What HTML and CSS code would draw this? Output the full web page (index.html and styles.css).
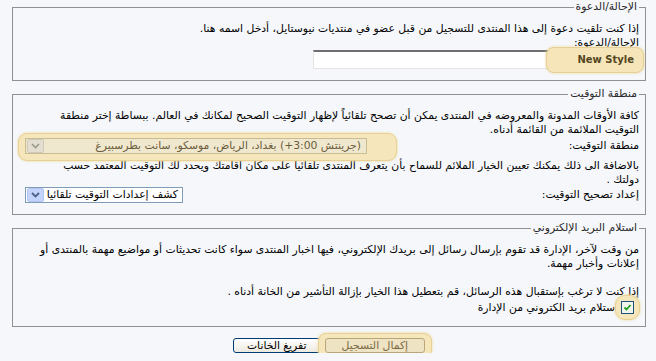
FILE: index.html
```html
<!DOCTYPE html>
<html dir="rtl" lang="ar">
<head>
    <meta charset="UTF-8">
    <title>التسجيل</title>
    <link rel="stylesheet" href="styles.css">
</head>
<body>
    <div class="page">
        <fieldset class="box">
            <legend>الإحالة/الدعوة</legend>
            <p>إذا كنت تلقيت دعوة إلى هذا المنتدى للتسجيل من قبل عضو في منتديات نيوستايل، أدخل اسمه هنا.</p>
            <p>الإحالة/الدعوة:</p>
            <div class="field">
                <span class="text-input"></span>
                <span class="hint">New Style</span>
            </div>
        </fieldset>

        <fieldset class="box">
            <legend>منطقة التوقيت</legend>
            <p>كافة الأوقات المدونة والمعروضه في المنتدى يمكن أن تصحح تلقائياً لإظهار التوقيت الصحيح لمكانك في العالم. ببساطة إختر منطقة<br>التوقيت الملائمة من القائمة أدناه.</p>
            <div class="row row-first">
                <span>منطقة التوقيت:</span>
                <span class="glow glow-select">
                    <span class="select select-off">
                        <span class="select-text">(جرينتش <span dir="ltr">+3:00</span>) بغداد، الرياض، موسكو، سانت بطرسبيرغ</span>
                        <span class="arrow arrow-off">
                            <svg width="9" height="6" viewBox="0 0 9 6"><path d="M1 1 L4.5 4.5 L8 1" fill="none" stroke="#9a9a8c" stroke-width="1.6"/></svg>
                        </span>
                    </span>
                </span>
            </div>
            <p class="under-glow">بالاضافة الى ذلك يمكنك تعيين الخيار الملائم للسماح بأن يتعرف المنتدى تلقائياً على مكان اقامتك ويحدد لك التوقيت المعتمد حسب<br>دولتك .</p>
            <div class="row">
                <span>إعداد تصحيح التوقيت:</span>
                <span class="select select-auto">
                    <span class="select-text">كشف إعدادات التوقيت تلقائيا</span>
                    <span class="arrow arrow-blue">
                        <svg width="9" height="6" viewBox="0 0 9 6"><path d="M1 1 L4.5 4.5 L8 1" fill="none" stroke="#4d6185" stroke-width="1.8"/></svg>
                    </span>
                </span>
            </div>
        </fieldset>

        <fieldset class="box">
            <legend>استلام البريد الإلكتروني</legend>
            <p>من وقت لآخر، الإدارة قد تقوم بإرسال رسائل إلى بريدك الإلكتروني، فيها اخبار المنتدى سواء كانت تحديثات أو مواضيع مهمة بالمنتدى أو<br>إعلانات وأخبار مهمة.</p>
            <p class="gap">إذا كنت لا ترغب بإستقبال هذه الرسائل، قم بتعطيل هذا الخيار بإزالة التأشير من الخانة أدناه .</p>
            <div class="check-row">
                <span class="glow glow-check">
                    <span class="checkbox">
                        <svg width="9" height="9" viewBox="0 0 9 9"><path d="M1.5 4.5 L3.5 6.5 L7.5 2" fill="none" stroke="#21a121" stroke-width="1.8"/></svg>
                    </span>
                </span>
                <span>استلام بريد الكتروني من الإدارة</span>
            </div>
        </fieldset>

        <div class="buttons">
            <span class="glow glow-button"><span class="button button-off">إكمال التسجيل</span></span>
            <span class="button">تفريغ الخانات</span>
        </div>
    </div>
</body>
</html>
```

FILE: styles.css
```css
body {
    margin: 0;
    background-color: #f5f7fb;
    color: #000;
    font-family: "DejaVu Sans", Tahoma, sans-serif;
    font-size: 10.8px;
}
.page {
    padding: 0 10px 0 12px;
}
.box {
    margin: 0 0 6px;
    padding: 8px 6px 11px;
    border: 1px solid #8f9090;
    min-width: 0;
}
.box legend {
    padding: 0 2px;
    line-height: 14px;
    color: #2a2a2a;
}
.box p {
    margin: 0;
    line-height: 14px;
}
.box p.gap {
    margin-top: 14px;
}
.field {
    position: relative;
}
.text-input {
    display: block;
    width: 323px;
    height: 16px;
    background-color: white;
    border-top: 2px solid #6f6f6f;
    border-right: 2px solid #8a8a8a;
    border-bottom: 1px solid #e4e4e4;
    border-left: 1px solid #e4e4e4;
}
.hint {
    position: absolute;
    top: -3px;
    right: -5px;
    width: 79px;
    height: 22px;
    padding: 2px 9px 0 8px;
    line-height: 20px;
    text-align: right;
    font-weight: bold;
    font-size: 10px;
    color: #54461f;
    background-color: #f5e5b9;
    border: 1px solid #e6cf92;
    border-radius: 8px;
    box-shadow: 0 0 3px #ecd49a;
}
.row {
    display: flex;
    justify-content: space-between;
    align-items: center;
    padding-left: 6px;
    line-height: 14px;
}
.row-first {
    margin-top: 1px;
}
.glow {
    position: relative;
    z-index: 1;
    background-color: #f5e6bc;
    border: 1px solid #e8d193;
    box-shadow: 0 0 3px #eed89e;
}
.glow-select {
    display: flex;
    padding: 4px 29px 6px 6px;
    margin: -5px -30px -7px -7px;
    border-radius: 9px;
}
.select {
    display: flex;
    align-items: center;
    height: 14px;
    padding: 0 1px;
    border: 1px solid #7f9db9;
    background-color: white;
    overflow: hidden;
}
.select-text {
    padding: 0 4px 0 10px;
    white-space: nowrap;
}
.select-off {
    width: 338px;
    justify-content: space-between;
    background-color: #efe8cf;
    border-color: #c9bc93;
    color: #6b5b3b;
}
.select-auto {
    width: 154px;
    justify-content: space-between;
}
.select-auto .select-text {
    padding: 0 3px 0 2px;
}
.arrow {
    display: flex;
    flex-shrink: 0;
    align-items: center;
    justify-content: center;
    width: 15px;
    height: 12px;
    border-radius: 2px;
    order: 2;
}
.arrow-off {
    background-color: #e3ded0;
    border: 1px solid #cfc9b8;
}
.arrow-blue {
    background-color: #c3d3fb;
    border: 1px solid #b3c6ef;
}
.box p.under-glow {
    margin-top: 5px;
}
.check-row {
    display: flex;
    align-items: center;
    gap: 3px;
    height: 15px;
    margin-top: 1px;
    line-height: 14px;
}
.glow-check {
    display: flex;
    padding: 5px;
    margin: -6px -1px -6px -6px;
    border-radius: 10px;
}
.checkbox {
    display: flex;
    align-items: center;
    justify-content: center;
    width: 11px;
    height: 11px;
    background-color: #f1f4ea;
    border: 1px solid #1c5180;
}
.buttons {
    display: flex;
    justify-content: center;
    align-items: center;
    gap: 4px;
    margin-top: 11px;
}
.button {
    display: inline-block;
    padding: 0 13px;
    line-height: 13px;
    border: 1px solid #003c74;
    border-radius: 3px;
    background: linear-gradient(#ffffff, #ece9e0);
}
.glow-button {
    display: inline-block;
    padding: 4px 6px;
    margin: -5px -7px;
    border-radius: 8px;
}
.button-off {
    padding: 0 16px;
    border-color: #b9a77a;
    color: #7a6a45;
    background: #eee3c3;
}
```
